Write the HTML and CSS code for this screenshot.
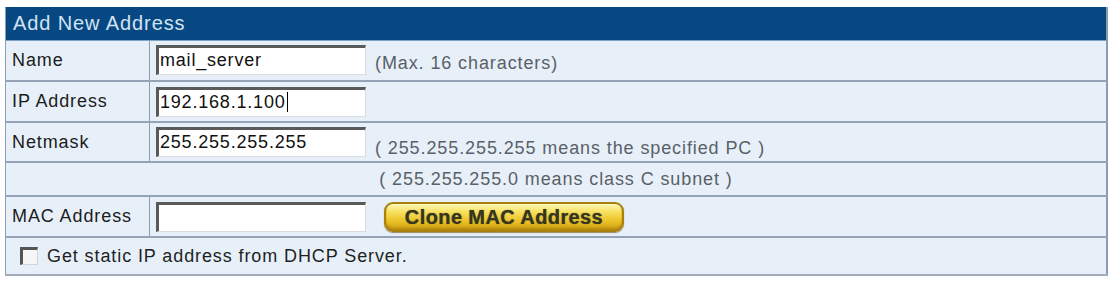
FILE: index.html
```html
<!DOCTYPE html>
<html>
<head>
<meta charset="utf-8">
<link rel="stylesheet" href="styles.css">
</head>
<body>
<div class="page">
  <table class="form">
    <tr class="head"><td colspan="2">Add New Address</td></tr>
    <tr class="r41">
      <td class="label">Name</td>
      <td class="field"><span class="input">mail_server</span><span class="hint">(Max. 16 characters)</span></td>
    </tr>
    <tr class="r41">
      <td class="label">IP Address</td>
      <td class="field"><span class="input">192.168.1.100<span class="caret"></span></span></td>
    </tr>
    <tr class="r40">
      <td class="label">Netmask</td>
      <td class="field"><span class="input">255.255.255.255</span><span class="hint low">( 255.255.255.255 means the specified PC )</span></td>
    </tr>
    <tr class="r34">
      <td colspan="2" class="center"><span class="hint">( 255.255.255.0 means class C subnet )</span></td>
    </tr>
    <tr class="r41">
      <td class="label">MAC Address</td>
      <td class="field"><span class="input"></span><span class="btn">Clone MAC Address</span></td>
    </tr>
    <tr class="r38 last">
      <td colspan="2" class="check"><span class="box"></span><span class="ctext">Get static IP address from DHCP Server.</span></td>
    </tr>
  </table>
</div>
</body>
</html>
```
FILE: styles.css
```css
html, body {
  margin: 0;
  padding: 0;
  background: #ffffff;
}
.page {
  padding: 7px 0 0 5px;
}
.form {
  width: 1103px;
  border-collapse: collapse;
  font-family: "Liberation Sans", Arial, sans-serif;
  font-size: 18px;
  letter-spacing: 0.9px;
  color: #1c1c1c;
  background: #e7f0f9;
  border-left: 1px solid #8e9cb0;
  border-right: 2px solid #8e9cb0;
}
.form td {
  padding: 0;
  border-bottom: 2px solid #95a3b6;
  vertical-align: middle;
}
.head td {
  height: 33px;
  background: #074882;
  color: #d2e3f2;
  padding-left: 7px;
  font-size: 20px;
  letter-spacing: 0.9px;
  border-bottom: 1px solid #7da3c8;
  box-sizing: border-box;
}
.r41 td { height: 41px; box-sizing: border-box; }
.r40 td { height: 40px; box-sizing: border-box; }
.r34 td { height: 34px; box-sizing: border-box; }
.r38 td { height: 38px; box-sizing: border-box; }
.last td { border-bottom: 2px solid #a3acbb; }
.label {
  width: 144px;
  padding-left: 6px !important;
  border-right: 1px solid #8e9cb0;
  box-sizing: border-box;
}
.field {
  padding-left: 6px !important;
}
.input {
  display: inline-block;
  vertical-align: middle;
  width: 210px;
  height: 30px;
  box-sizing: border-box;
  background: #ffffff;
  border-top: 3px solid #5a5a5a;
  border-left: 3px solid #5a5a5a;
  border-right: 1px solid #dcdcdc;
  border-bottom: 1px solid #dcdcdc;
  color: #111;
  line-height: 25px;
  padding-left: 1px;
  letter-spacing: 0.8px;
}
.caret {
  display: inline-block;
  width: 1px;
  height: 20px;
  background: #000;
  vertical-align: -4px;
  margin-left: 1px;
}
.hint {
  display: inline-block;
  vertical-align: middle;
  margin-left: 9px;
  padding-top: 6px;
  color: #5a6067;
  font-size: 18px;
  letter-spacing: 0.9px;
}
.hint.low {
  padding-top: 12px;
}
.center {
  text-align: center;
}
.center .hint {
  margin-left: 0;
  padding-top: 0;
}
.btn {
  display: inline-block;
  vertical-align: middle;
  margin-left: 18px;
  width: 240px;
  height: 30px;
  box-sizing: border-box;
  border: 2px solid #a8800e;
  border-radius: 9px;
  background: linear-gradient(to bottom, #fff9b8 0%, #f8e060 30%, #e9bf22 70%, #c99a12 100%);
  box-shadow: inset 0 -2px 2px #b88c10, 0 1px 1px #9a8a60;
  text-align: center;
  font-family: "Liberation Sans Narrow", "Liberation Sans", sans-serif;
  font-weight: bold;
  font-size: 20px;
  letter-spacing: 0.4px;
  line-height: 26px;
  color: #36361f;
  text-shadow: 0 0 1px #5b5528;
}
.check {
  padding-left: 14px !important;
}
.box {
  display: inline-block;
  vertical-align: middle;
  width: 18px;
  height: 18px;
  box-sizing: border-box;
  background: #f6f6f6;
  border-top: 3px solid #555555;
  border-left: 3px solid #555555;
  border-right: 1px solid #d4d4d4;
  border-bottom: 1px solid #d4d4d4;
}
.ctext {
  display: inline-block;
  vertical-align: middle;
  margin-left: 9px;
  color: #1f1f1f;
  font-size: 18px;
  letter-spacing: 0.9px;
}
```
